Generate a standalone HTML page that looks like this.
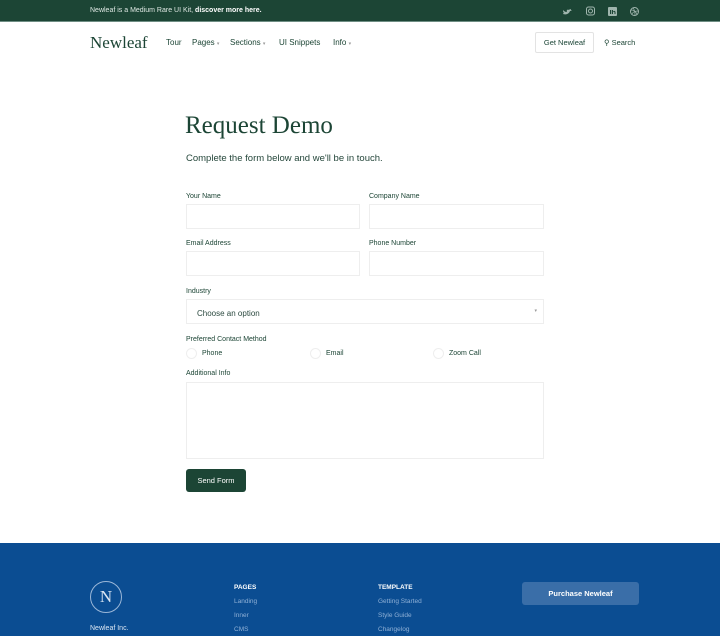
<!DOCTYPE html>
<html><head><style>
*{box-sizing:border-box;margin:0;padding:0}
body{width:720px;height:636px;overflow:hidden;background:#fff;font-family:"Liberation Sans",sans-serif;color:#1b4536;position:relative}
.a{position:absolute}
.top{left:0;top:0;width:720px;height:22px;background:#1c4535;border-bottom:1px solid #6f8e84}
.t{font-size:7px;color:#dfe8e4}
.nav{font-size:8px;color:#1c4535}
.lbl{font-size:7px;color:#1c4535}
.inp{border:1px solid #eeeeee;background:#fff}
.ft{font-size:6.5px;color:#8fb0d6}
.fh{font-size:6.5px;color:#fff;font-weight:bold}
.rad{width:11px;height:11px;border:1px solid #eee;border-radius:50%}
</style></head><body>
<div class="a top"></div>
<div class="a t" style="left:90px;top:7px">Newleaf is a Medium Rare UI Kit, <b style="color:#fff">discover more here.</b></div>
<svg class="a" style="left:562px;top:6px" width="80" height="11" fill="#9fb5ad">
<path d="M1 8c3 1 6 0 7-3 1 0 2-1 2-1-1 0-1 0-2 0 1 0 1-1 1-1-1 0-1 0-2 1C6 3 4 4 5 6 3 6 2 5 1 4c0 1 0 2 1 3H1c0 1 1 1 2 1z"/>
<rect x="24.5" y="1" width="8" height="8" rx="2" fill="none" stroke="#9fb5ad"/><circle cx="28.5" cy="5" r="2" fill="none" stroke="#9fb5ad"/>
<rect x="46" y="1" width="9" height="9" rx="1"/><rect x="48" y="4" width="1.2" height="4" fill="#1c4535"/><path d="M50 4h1v4h-1zM51 5.5c1-1 2.5-1 2.5 1V8h-1V6.5c0-1-1.5-1-1.5 0z" fill="#1c4535"/>
<circle cx="72.5" cy="5.5" r="4" fill="none" stroke="#9fb5ad"/><path d="M69 4c2 0 5 1 6 5M70 8c1-2 3-3 6-3M71 2c1 1 2 4 2 7" stroke="#9fb5ad" fill="none" stroke-width=".7"/>
</svg>
<div class="a" style="left:90px;top:33px;font-family:'Liberation Serif',serif;font-size:17px;color:#1c4535">Newleaf</div>
<div class="a nav" style="left:166px;top:38px">Tour</div>
<div class="a nav" style="left:192px;top:38px">Pages <span style="font-size:5px;color:#999">▾</span></div>
<div class="a nav" style="left:230px;top:38px">Sections <span style="font-size:5px;color:#999">▾</span></div>
<div class="a nav" style="left:279px;top:38px">UI Snippets</div>
<div class="a nav" style="left:333px;top:38px">Info <span style="font-size:5px;color:#999">▾</span></div>
<div class="a" style="left:535px;top:32px;width:59px;height:21px;border:1px solid #e3e3e3;border-radius:2px;font-size:7.5px;text-align:center;line-height:19px">Get Newleaf</div>
<div class="a nav" style="left:604px;top:38px;font-size:7.5px">⚲ Search</div>
<div class="a" style="left:185px;top:112px;font-family:'Liberation Serif',serif;font-size:25px;color:#1c4535">Request Demo</div>
<div class="a" style="left:186px;top:153px;font-size:9.5px;color:#24463a">Complete the form below and we'll be in touch.</div>
<div class="a lbl" style="left:186px;top:193px">Your Name</div>
<div class="a lbl" style="left:369px;top:193px">Company Name</div>
<div class="a inp" style="left:186px;top:204px;width:174px;height:25px"></div>
<div class="a inp" style="left:369px;top:204px;width:175px;height:25px"></div>
<div class="a lbl" style="left:186px;top:240px">Email Address</div>
<div class="a lbl" style="left:369px;top:240px">Phone Number</div>
<div class="a inp" style="left:186px;top:251px;width:174px;height:25px"></div>
<div class="a inp" style="left:369px;top:251px;width:175px;height:25px"></div>
<div class="a lbl" style="left:186px;top:288px">Industry</div>
<div class="a inp" style="left:186px;top:299px;width:358px;height:25px;font-size:8px;color:#2c4a40;padding:9px 0 0 10px">Choose an option<span style="position:absolute;right:6px;top:8px;font-size:5px;color:#999">▾</span></div>
<div class="a lbl" style="left:186px;top:336px">Preferred Contact Method</div>
<div class="a rad" style="left:186px;top:348px"></div><div class="a lbl" style="left:202px;top:350px">Phone</div>
<div class="a rad" style="left:310px;top:348px"></div><div class="a lbl" style="left:326px;top:350px">Email</div>
<div class="a rad" style="left:433px;top:348px"></div><div class="a lbl" style="left:449px;top:350px">Zoom Call</div>
<div class="a lbl" style="left:186px;top:370px">Additional Info</div>
<div class="a inp" style="left:186px;top:382px;width:358px;height:77px"></div>
<div class="a" style="left:186px;top:469px;width:60px;height:23px;background:#1c4535;border-radius:3px;color:#fff;font-size:7.5px;text-align:center;line-height:23px">Send Form</div>
<div class="a" style="left:0;top:543px;width:720px;height:93px;background:#0b4d92"></div>
<div class="a" style="left:90px;top:581px;width:32px;height:32px;border:1px solid #9bb7d8;border-radius:50%;color:#dbe6f3;font-family:'Liberation Serif',serif;font-size:17px;text-align:center;line-height:30px">N</div>
<div class="a" style="left:90px;top:625px;font-size:7px;color:#dbe6f3">Newleaf Inc.</div>
<div class="a fh" style="left:234px;top:584px">PAGES</div>
<div class="a ft" style="left:234px;top:598px">Landing</div>
<div class="a ft" style="left:234px;top:612px">Inner</div>
<div class="a ft" style="left:234px;top:626px">CMS</div>
<div class="a fh" style="left:378px;top:584px">TEMPLATE</div>
<div class="a ft" style="left:378px;top:598px">Getting Started</div>
<div class="a ft" style="left:378px;top:612px">Style Guide</div>
<div class="a ft" style="left:378px;top:626px">Changelog</div>
<div class="a" style="left:522px;top:582px;width:117px;height:23px;background:#3a6ea8;border-radius:3px;color:#fff;font-size:7.5px;font-weight:bold;text-align:center;line-height:23px">Purchase Newleaf</div>
</body></html>
